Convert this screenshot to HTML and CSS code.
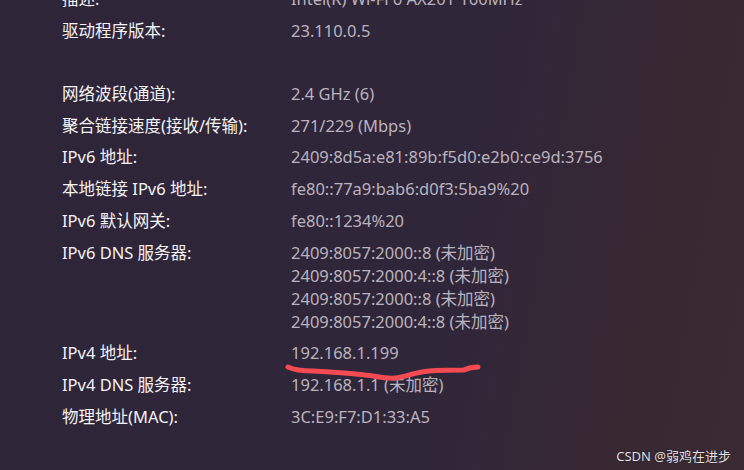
FILE: index.html
```html
<!DOCTYPE html>
<html lang="zh-CN">
<head>
    <meta charset="UTF-8">
    <title>WLAN 属性</title>
    <link rel="stylesheet" href="styles.css">
</head>
<body>

<div class="panel">
    <dl class="props">
        <dt>描述:</dt><dd>Intel(R) Wi-Fi 6 AX201 160MHz</dd>
        <dt>驱动程序版本:</dt><dd>23.110.0.5</dd>
        <dt class="blank"></dt><dd class="blank"></dd>
        <dt>网络波段(通道):</dt><dd>2.4 GHz (6)</dd>
        <dt>聚合链接速度(接收/传输):</dt><dd>271/229 (Mbps)</dd>
        <dt>IPv6 地址:</dt><dd>2409:8d5a:e81:89b:f5d0:e2b0:ce9d:3756</dd>
        <dt>本地链接 IPv6 地址:</dt><dd>fe80::77a9:bab6:d0f3:5ba9%20</dd>
        <dt>IPv6 默认网关:</dt><dd>fe80::1234%20</dd>
        <dt>IPv6 DNS 服务器:</dt>
        <dd>2409:8057:2000::8 (未加密)<br>2409:8057:2000:4::8 (未加密)<br>2409:8057:2000::8 (未加密)<br>2409:8057:2000:4::8 (未加密)</dd>
        <dt>IPv4 地址:</dt><dd class="marked">192.168.1.199
            <svg class="scribble" width="200" height="24" viewBox="0 0 200 24">
                <path d="M3 9 C9 12 17 13 28 13 C47 14 65 15 80 17 C91 18 100 21 110 20 C121 19 130 14 144 13 C158 12 168 12 179 12 C183 10 187 9 193 9" />
            </svg>
        </dd>
        <dt>IPv4 DNS 服务器:</dt><dd>192.168.1.1 (未加密)</dd>
        <dt>物理地址(MAC):</dt><dd>3C:E9:F7:D1:33:A5</dd>
    </dl>
</div>

<div class="watermark">CSDN @弱鸡在进步</div>

</body>
</html>
```

FILE: styles.css
```css
html, body {
    height: 100%;
}
body {
    margin: 0;
    overflow: hidden;
    font-family: 'Noto Sans', 'Noto Sans CJK SC', sans-serif;
    background: linear-gradient(100deg, #2f2539 0%, #30263a 60%, #382832 85%, #3a2a33 100%);
    color: #f2f0f2;
    position: relative;
}
.panel {
    padding-left: 62px;
}
.props {
    display: grid;
    grid-template-columns: 229px auto;
    row-gap: 8.7px;
    margin: -13px 0 0 0;
    font-size: 16.5px;
    line-height: 23px;
}
.props dt {
    color: #f4f2f4;
}
.props dd {
    margin: 0;
    color: #bab3bd;
}
.props .blank {
    height: 23px;
}
.marked {
    position: relative;
}
.scribble {
    position: absolute;
    left: -6px;
    top: 17px;
}
.scribble path {
    fill: none;
    stroke: #f44a52;
    stroke-width: 5;
    stroke-linecap: round;
}
.watermark {
    position: absolute;
    right: 13px;
    bottom: 5px;
    font-size: 13px;
    color: #e6e2e6;
    text-shadow: 0 0 1px #000;
}
```
